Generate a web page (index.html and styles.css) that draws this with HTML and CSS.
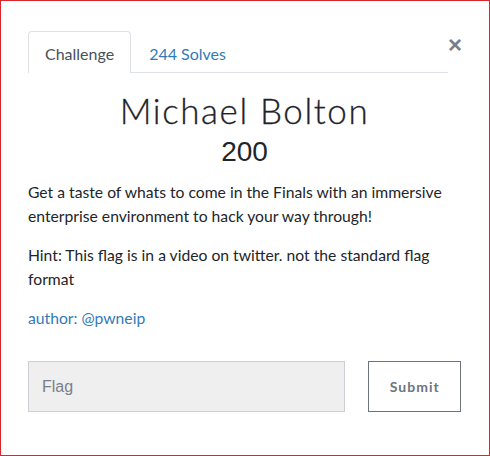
FILE: index.html
```html
<!DOCTYPE html>
<html>
<head>
<meta charset="utf-8">
<link rel="stylesheet" href="styles.css">
</head>
<body>
<div class="modal">
  <div class="header">
    <ul class="tabs">
      <li class="tab active">Challenge</li>
      <li class="tab link">244 Solves</li>
    </ul>
    <button class="close" type="button">×</button>
  </div>
  <h2 class="title">Michael Bolton</h2>
  <h3 class="points">200</h3>
  <div class="desc">
    <p>Get a taste of whats to come in the Finals with an immersive enterprise environment to hack your way through!</p>
    <p>Hint: This flag is in a video on twitter. not the standard flag format</p>
    <p class="author">author: @pwneip</p>
  </div>
  <form class="form">
    <input class="flag" type="text" placeholder="Flag">
    <button class="submit" type="button">Submit</button>
  </form>
</div>
</body>
</html>
```
FILE: styles.css
```css
html, body {
  margin: 0;
  padding: 0;
  background: #fff;
}
.modal {
  box-sizing: border-box;
  width: 490px;
  height: 456px;
  border: 1px solid #d9262c;
  padding: 30px 28px 0 27px;
  font-family: Lato, "Open Sans", sans-serif;
  color: #212529;
}
.header {
  display: flex;
  align-items: flex-start;
}
.tabs {
  flex: 0 0 420px;
  display: flex;
  list-style: none;
  margin: 0;
  padding: 0;
  border-bottom: 1px solid #dee2e6;
}
.tab {
  box-sizing: border-box;
  height: 41px;
  padding: 0 16px 0 16px;
  font-size: 16px;
  line-height: 43px;
  border: 1px solid transparent;
  border-bottom: none;
  margin-bottom: -1px;
}
.tab.active {
  border-color: #dee2e6;
  border-radius: 4px 4px 0 0;
  background: #fff;
  color: #495057;
  height: 42px;
}
.tab.link {
  color: #337ab7;
  padding-left: 17px;
}
.close {
  margin: 4px 0 0 0;
  padding: 0;
  border: none;
  background: none;
  font-family: "Liberation Sans", Arial, sans-serif;
  font-size: 24px;
  font-weight: 700;
  line-height: 20px;
  color: #7a7f86;
  width: 14px;
}
.title {
  margin: 17px 0 0;
  text-align: center;
  font-family: Lato, sans-serif;
  font-weight: 300;
  font-size: 35px;
  line-height: 40px;
  letter-spacing: 1.6px;
  color: #1f2328;
  -webkit-text-stroke: 0.3px #1f2328;
}
.points {
  margin: 5px 0 0;
  text-align: center;
  font-family: "Liberation Sans", Arial, sans-serif;
  font-weight: 400;
  font-size: 28px;
  line-height: 34px;
  color: #212529;
}
.desc {
  margin-top: 11px;
  font-size: 15.7px;
  line-height: 24px;
}
.desc p {
  margin: 0 0 15px;
}
.desc .author {
  color: #337ab7;
}
.form {
  display: flex;
  gap: 23px;
  margin-top: 31px;
}
.flag {
  box-sizing: border-box;
  width: 319px;
  height: 51px;
  margin: 0;
  border: 1px solid #ccd0d5;
  background: #efefef;
  padding: 0 13px;
  font-family: "Liberation Sans", Arial, sans-serif;
  font-size: 16px;
  color: #495057;
}
.flag::placeholder {
  color: #7a8089;
}
.submit {
  box-sizing: border-box;
  width: 93px;
  height: 51px;
  border: 1px solid #6c757d;
  background: #fff;
  font-family: Lato, sans-serif;
  font-weight: 700;
  font-size: 14px;
  letter-spacing: 1px;
  color: #6c757d;
}
```
